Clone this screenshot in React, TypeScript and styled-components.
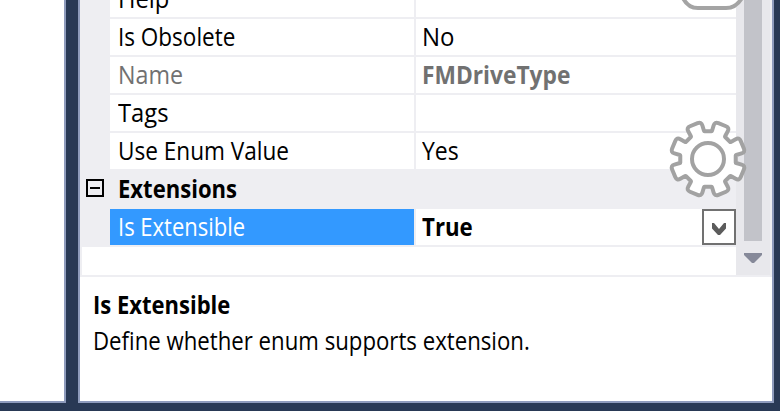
import React from "react";
import styled, { createGlobalStyle } from "styled-components";

const GlobalStyle = createGlobalStyle`
  body { margin: 0; overflow: hidden; background: #293955; }
`;

const Window = styled.div`
  position: relative;
  display: grid;
  grid-template-columns: 66px 696px;
  column-gap: 12px;
  box-sizing: border-box;
  width: 780px;
  height: 411px;
  padding-bottom: 8px;
  overflow: hidden;
  background: #293955;
  color: #000;
  font-family: "Open Sans", "Noto Sans", sans-serif;
  font-size: 25px;
  line-height: 34px;
`;

const Editor = styled.div`
  box-sizing: border-box;
  border: solid #8e9bbc;
  border-width: 0 2px 2px 0;
  background: #fff;
`;

const Panel = styled.div`
  display: flex;
  flex-direction: column;
  box-sizing: border-box;
  height: 403px;
  border: solid #8e9bbc;
  border-width: 0 2px 2px;
  background: #fff;
`;

const Browser = styled.div`
  display: flex;
  flex: none;
  box-sizing: border-box;
  height: 277px;
  overflow: hidden;
  border-bottom: 2px solid #eeeef2;
`;

const Grid = styled.div`
  width: 656px;
  height: 275px;
  overflow: hidden;
`;

const Rows = styled.div`
  margin-top: -19px;
  width: 656px;
`;

const Row = styled.div`
  display: grid;
  grid-template-columns: 30px 304px 322px;
  height: 38px;
  background: #eeeef2;
`;

const Gutter = styled.div`
  display: flex;
  align-items: flex-start;
  padding: 8px 0 0 6px;
`;

const Name = styled.div<{ $selected?: boolean; $muted?: boolean }>`
  height: 36px;
  padding-left: 8px;
  background: ${(p) => (p.$selected ? "#3399ff" : "#fff")};
  color: ${(p) => (p.$selected ? "#fff" : p.$muted ? "#717171" : "#000")};
`;

const Value = styled.div<{ $muted?: boolean }>`
  display: flex;
  justify-content: space-between;
  box-sizing: border-box;
  height: 36px;
  margin-left: 2px;
  padding-left: 6px;
  background: #fff;
  color: ${(p) => (p.$muted ? "#717171" : "#000")};
`;

const Category = styled.div`
  height: 36px;
  padding-left: 8px;
`;

const Label = styled.span<{ $scale: number; $bold?: boolean }>`
  display: inline-block;
  font-weight: ${(p) => (p.$bold ? 700 : 400)};
  white-space: nowrap;
  transform: scaleX(${(p) => p.$scale});
  transform-origin: 0 0;
`;

const EmptyArea = styled.div`
  height: 28px;
  border-left: 2px solid #eeeef2;
  background: #fff;
`;

const Expander = styled.div`
  display: grid;
  place-items: center;
  box-sizing: border-box;
  width: 18px;
  height: 18px;
  border: 2px solid #000;

  &::before {
    content: "";
    width: 10px;
    height: 2px;
    background: #000;
  }
`;

const DropButton = styled.div`
  display: flex;
  box-sizing: border-box;
  width: 34px;
  height: 36px;
  border: 2px solid #717171;
  background: #fff;
`;

const ScrollBar = styled.div`
  display: flex;
  flex-direction: column;
  align-items: center;
  box-sizing: border-box;
  width: 36px;
  height: 275px;
  border-right: 2px solid #eeeef2;
  background: #e8e8ec;
`;

const Thumb = styled.div`
  width: 18px;
  height: 241px;
  margin-bottom: 12px;
  background: #c2c3c9;
`;

const Description = styled.div`
  display: flex;
  flex-direction: column;
  gap: 2px;
  padding: 10px 0 0 13px;
`;

const GearOverlay = styled.svg`
  position: absolute;
  left: 668px;
  top: 119px;
`;

const PillOverlay = styled.svg`
  position: absolute;
  left: 680px;
  top: 0;
`;

function gearPath() {
  const points: [number, number][] = [];
  const polar = (r: number, deg: number): [number, number] => {
    const a = (deg * Math.PI) / 180;
    return [r * Math.sin(a), -r * Math.cos(a)];
  };
  for (let k = 0; k < 8; k++) {
    const a = k * 45;
    points.push(polar(28, a - 8), polar(28, a + 8), polar(38, a + 10.2), polar(38, a + 34.8));
  }
  const n = points.length;
  let d = "";
  points.forEach((p, i) => {
    const prev = points[(i + n - 1) % n];
    const next = points[(i + 1) % n];
    const radius = i % 4 > 1 ? 4 : 0.5;
    const toward = (q: [number, number]) => {
      const len = Math.hypot(q[0] - p[0], q[1] - p[1]);
      return [p[0] + ((q[0] - p[0]) * radius) / len, p[1] + ((q[1] - p[1]) * radius) / len]
        .map((v) => v.toFixed(2))
        .join(" ");
    };
    d += `${i ? "L" : "M"}${toward(prev)}Q${p[0].toFixed(2)} ${p[1].toFixed(2)} ${toward(next)}`;
  });
  return d + "Z";
}

type Property = {
  name: string;
  scale: number;
  value?: string;
  valueScale?: number;
  bold?: boolean;
  muted?: boolean;
  selected?: boolean;
};

const properties: Property[] = [
  { name: "Help", scale: 0.95 },
  { name: "Is Obsolete", scale: 0.9, value: "No", valueScale: 0.96 },
  { name: "Name", scale: 0.93, value: "FMDriveType", valueScale: 0.91, bold: true, muted: true },
  { name: "Tags", scale: 0.95 },
  { name: "Use Enum Value", scale: 0.903, value: "Yes", valueScale: 0.92 },
];

const extensions: Property[] = [
  { name: "Is Extensible", scale: 0.88, value: "True", valueScale: 0.89, bold: true, selected: true },
];

function PropertyRow({ item }: { item: Property }) {
  return (
    <Row>
      <Gutter />
      <Name $selected={item.selected} $muted={item.muted}>
        <Label $scale={item.scale}>{item.name}</Label>
      </Name>
      <Value $muted={item.muted}>
        {item.value && (
          <Label $scale={item.valueScale ?? 1} $bold={item.bold}>{item.value}</Label>
        )}
        {item.selected && (
          <DropButton>
            <svg width="30" height="32" viewBox="0 0 30 32">
              <path d="M8 12H10L15 18L20 12H22V17.500L16 24H14L8 17.500Z" fill="#5c5c5c" />
            </svg>
          </DropButton>
        )}
      </Value>
    </Row>
  );
}

export default function App() {
  return (
    <>
      <GlobalStyle />
      <Window>
        <Editor />
        <Panel>
          <Browser>
            <Grid>
              <Rows>
                {properties.map((item) => <PropertyRow key={item.name} item={item} />)}
                <Row>
                  <Gutter><Expander /></Gutter>
                  <Category><Label $bold $scale={0.882}>Extensions</Label></Category>
                </Row>
                {extensions.map((item) => <PropertyRow key={item.name} item={item} />)}
                <EmptyArea />
              </Rows>
            </Grid>
            <ScrollBar>
              <Thumb />
              <svg width="18" height="10" viewBox="0 0 18 10"><path d="M0 0h18v2L10 10H8L0 2z" fill="#868999" /></svg>
            </ScrollBar>
          </Browser>
          <Description>
            <Label $bold $scale={0.88}>Is Extensible</Label>
            <Label $scale={0.888}>Define whether enum supports extension.</Label>
          </Description>
        </Panel>
        <PillOverlay width="66" height="12" viewBox="0 0 66 12">
          <path d="M2 -4Q7 8 18 8H46Q57 8 63 -4" fill="#fff" stroke="#a4a4a4" strokeWidth="4" />
        </PillOverlay>
        <GearOverlay width="80" height="80" viewBox="-40 -40 80 80">
          <path d={gearPath()} fill="#fff" stroke="#a2a2a2" strokeWidth="4" strokeLinejoin="round" />
          <circle r="16" fill="#fff" stroke="#a2a2a2" strokeWidth="4" />
        </GearOverlay>
      </Window>
    </>
  );
}
